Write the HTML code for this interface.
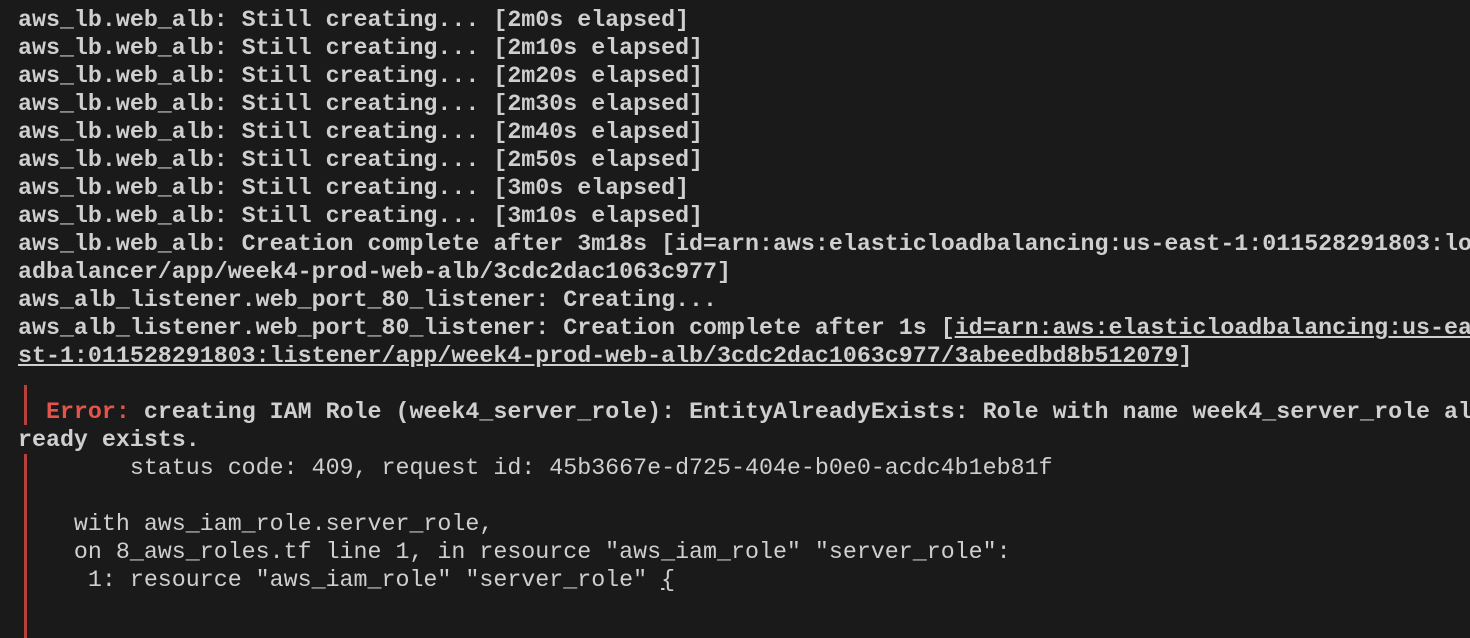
<!DOCTYPE html>
<html><head><meta charset="utf-8"><style>
html,body{margin:0;padding:0;background:#1a1a1a;width:1470px;height:638px;overflow:hidden}
.t{position:absolute;left:18px;white-space:pre;font-family:"Liberation Mono","DejaVu Sans Mono",monospace;font-size:23.3px;line-height:28px;color:#cfcfcf}
.b{font-weight:bold}
.r{color:#e5534b}
.u{text-decoration:underline}
.bar{position:absolute;left:24px;width:3px;background:#b8403a}
</style></head><body>
<div class="t b" style="top:-22px">─┘
aws_lb.web_alb: Still creating... [2m0s elapsed]
aws_lb.web_alb: Still creating... [2m10s elapsed]
aws_lb.web_alb: Still creating... [2m20s elapsed]
aws_lb.web_alb: Still creating... [2m30s elapsed]
aws_lb.web_alb: Still creating... [2m40s elapsed]
aws_lb.web_alb: Still creating... [2m50s elapsed]
aws_lb.web_alb: Still creating... [3m0s elapsed]
aws_lb.web_alb: Still creating... [3m10s elapsed]
aws_lb.web_alb: Creation complete after 3m18s [id=arn:aws:elasticloadbalancing:us-east-1:011528291803:lo
adbalancer/app/week4-prod-web-alb/3cdc2dac1063c977]
aws_alb_listener.web_port_80_listener: Creating...
aws_alb_listener.web_port_80_listener: Creation complete after 1s [<span class="u">id=arn:aws:elasticloadbalancing:us-ea</span>
<span class="u">st-1:011528291803:listener/app/week4-prod-web-alb/3cdc2dac1063c977/3abeedbd8b512079</span>]

  <span class="r">Error:</span> creating IAM Role (week4_server_role): EntityAlreadyExists: Role with name week4_server_role al
ready exists.</div>
<div class="t" style="top:454px">        status code: 409, request id: 45b3667e-d725-404e-b0e0-acdc4b1eb81f

    with aws_iam_role.server_role,
    on 8_aws_roles.tf line 1, in resource "aws_iam_role" "server_role":
     1: resource "aws_iam_role" "server_role" <span class="u">{</span></div>
<div class="bar" style="top:385px;height:40px"></div>
<div class="bar" style="top:454px;height:184px"></div>
</body></html>
